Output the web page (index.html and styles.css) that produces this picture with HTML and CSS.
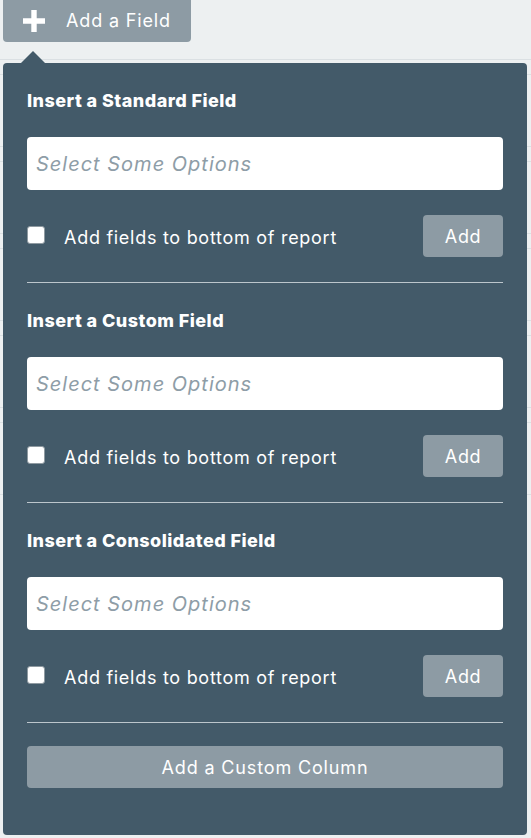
FILE: index.html
```html
<!DOCTYPE html>
<html lang="en">
<head>
<meta charset="utf-8">
<title>Add a Field</title>
<link rel="stylesheet" href="styles.css">
</head>
<body>
<div class="page">
  <div class="toolbar">
    <button class="add-field-btn" type="button">
      <svg class="plus-icon" viewBox="0 0 22 22" width="22" height="22" aria-hidden="true"><path d="M8.3 0h5.4v8.3H22v5.4h-8.3V22H8.3v-8.3H0V8.3h8.3z"/></svg>
      <span>Add a Field</span>
    </button>
  </div>

  <div class="report">
    <div class="report-row"></div>
    <div class="report-row"></div>
    <div class="report-row"></div>
    <div class="report-row"></div>
    <div class="report-row"></div>
    <div class="report-row"></div>
    <div class="report-row"></div>
    <div class="report-row"></div>
    <div class="report-row"></div>
    <div class="report-row"></div>
    <div class="report-row"></div>
  </div>

  <div class="dropdown">
    <span class="caret"></span>

    <section class="field-section">
      <h3 class="section-title">Insert a Standard Field</h3>
      <div class="select-box">Select Some Options</div>
      <div class="option-row">
        <label class="check-label"><span class="check-box"></span>Add fields to bottom of report</label>
        <button class="btn-add" type="button">Add</button>
      </div>
    </section>
    <hr class="divider">

    <section class="field-section">
      <h3 class="section-title">Insert a Custom Field</h3>
      <div class="select-box">Select Some Options</div>
      <div class="option-row">
        <label class="check-label"><span class="check-box"></span>Add fields to bottom of report</label>
        <button class="btn-add" type="button">Add</button>
      </div>
    </section>
    <hr class="divider">

    <section class="field-section">
      <h3 class="section-title">Insert a Consolidated Field</h3>
      <div class="select-box">Select Some Options</div>
      <div class="option-row">
        <label class="check-label"><span class="check-box"></span>Add fields to bottom of report</label>
        <button class="btn-add" type="button">Add</button>
      </div>
    </section>
    <hr class="divider divider-last">

    <button class="btn-wide" type="button">Add a Custom Column</button>
  </div>
</div>
</body>
</html>
```

FILE: styles.css
```css
* { box-sizing: border-box; }

html, body {
  margin: 0;
  padding: 0;
  background: #edf0f1;
  font-family: Inter, "Open Sans", Arial, sans-serif;
  color: #fff;
}

.page {
  position: relative;
  width: 531px;
  height: 838px;
  overflow: hidden;
}

.toolbar {
  padding-left: 3px;
  height: 63px;
}

.add-field-btn {
  display: flex;
  align-items: center;
  width: 188px;
  height: 46px;
  margin-top: -4px;
  padding: 3px 0 0 20px;
  border: 0;
  border-radius: 4px;
  background: #8d9ba4;
  color: #fff;
  font-family: inherit;
  font-size: 18px;
  letter-spacing: 0.85px;
  cursor: pointer;
}

.plus-icon {
  fill: #fff;
  flex: none;
}

.add-field-btn span {
  margin-left: 21px;
}

.report {
  display: flex;
  flex-direction: column;
}

.report-row {
  height: 72px;
  border-top: 1px solid #dbe0e3;
}
.report-row:nth-child(odd) { height: 15px; }

.dropdown {
  position: absolute;
  top: 63px;
  left: 3px;
  width: 524px;
  padding: 26px 24px 47px;
  background: #435a69;
  border-radius: 4px;
}

.caret {
  position: absolute;
  top: -12px;
  left: 18px;
  width: 0;
  height: 0;
  border-left: 12px solid transparent;
  border-right: 12px solid transparent;
  border-bottom: 12px solid #435a69;
}

.section-title {
  margin: 0 0 24px;
  font-size: 18px;
  line-height: 24px;
  font-weight: 800;
  letter-spacing: 0.45px;
}

.select-box {
  height: 53px;
  padding: 0 9px;
  display: flex;
  align-items: center;
  background: #fff;
  border-radius: 4px;
  color: #8e9da7;
  font-style: italic;
  font-size: 20px;
  letter-spacing: 1px;
}

.option-row {
  margin-top: 25px;
  display: flex;
  align-items: center;
  justify-content: space-between;
}

.check-label {
  display: flex;
  align-items: center;
  font-size: 18px;
  letter-spacing: 0.72px;
  padding-top: 2px;
}

.check-box {
  width: 18px;
  height: 18px;
  margin-right: 19px;
  margin-top: -5px;
  background: #fff;
  border: 1px solid #8f9aa1;
  border-radius: 3px;
}

.btn-add {
  width: 80px;
  height: 42px;
  border: 0;
  border-radius: 4px;
  background: #8d9ba4;
  color: #fff;
  font-family: inherit;
  font-size: 18px;
  letter-spacing: 0.6px;
}

.divider {
  margin: 25px 0 26px;
  border: 0;
  border-top: 1px solid #bcc6cc;
  height: 0;
}

.divider-last { margin-bottom: 23px; }

.btn-wide {
  display: block;
  width: 100%;
  height: 42px;
  border: 0;
  border-radius: 4px;
  background: #8d9ba4;
  color: #fff;
  font-family: inherit;
  font-size: 18px;
  letter-spacing: 0.85px;
}
```
